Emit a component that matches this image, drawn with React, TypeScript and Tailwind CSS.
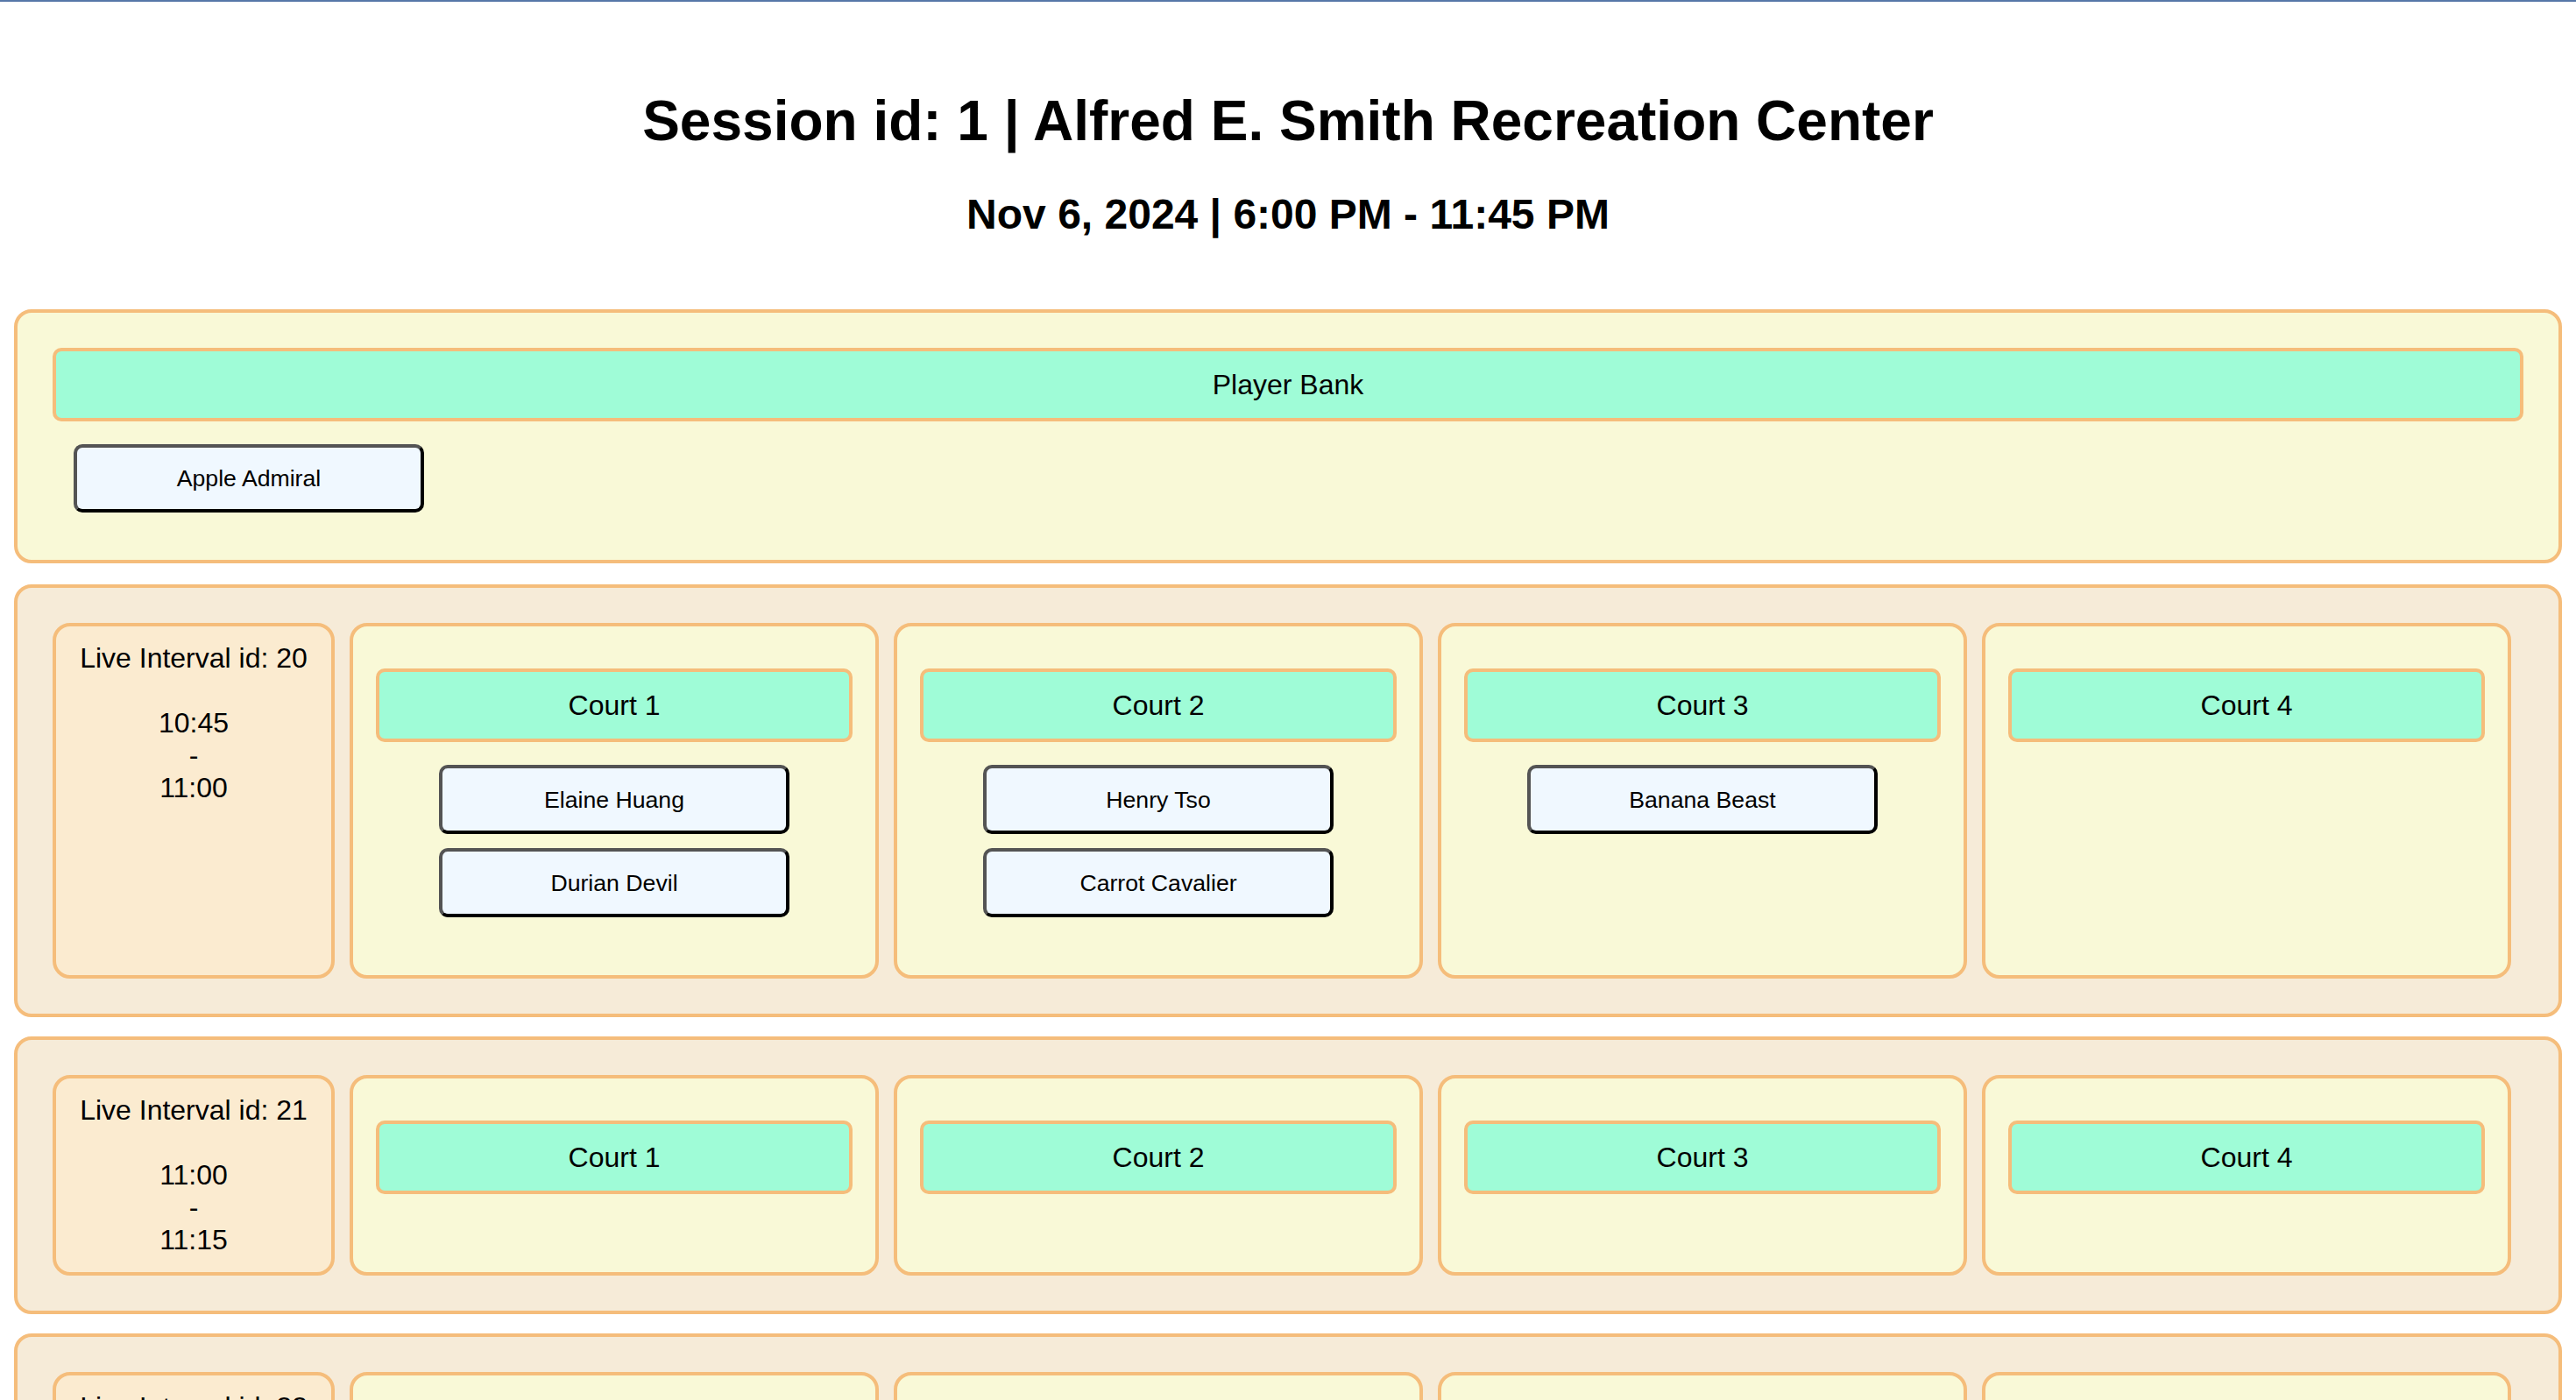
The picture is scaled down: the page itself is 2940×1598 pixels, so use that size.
import React from "react";

type Court = { name: string; players: string[] };
type Interval = { id: number; start: string; end: string; courts: Court[] };

const emptyCourts = (): Court[] => [
  { name: "Court 1", players: [] },
  { name: "Court 2", players: [] },
  { name: "Court 3", players: [] },
  { name: "Court 4", players: [] },
];

const intervals: Interval[] = [
  {
    id: 20,
    start: "10:45",
    end: "11:00",
    courts: [
      { name: "Court 1", players: ["Elaine Huang", "Durian Devil"] },
      { name: "Court 2", players: ["Henry Tso", "Carrot Cavalier"] },
      { name: "Court 3", players: ["Banana Beast"] },
      { name: "Court 4", players: [] },
    ],
  },
  { id: 21, start: "11:00", end: "11:15", courts: emptyCourts() },
  { id: 22, start: "11:15", end: "11:30", courts: emptyCourts() },
  { id: 23, start: "11:30", end: "11:45", courts: emptyCourts() },
];

function PlayerChip({ name, bank }: { name: string; bank?: boolean }) {
  return (
    <button
      className={
        (bank ? "h-[78px] " : "h-[79px] ") +
        "w-[400px] shrink-0 rounded-[10px] border-[4px] border-solid border-t-[#545454] border-l-[#545454] border-r-black border-b-black bg-[#f0f8ff] text-[26.67px] text-black"
      }
    >
      {name}
    </button>
  );
}

function Header({ label }: { label: string }) {
  return (
    <div className="h-[84px] flex items-center justify-center rounded-[10px] border-[4px] border-[#f5bd7b] bg-[#9ffcd7] text-[32px] leading-[37px]">
      {label}
    </div>
  );
}

function CourtCard({ court }: { court: Court }) {
  return (
    <div className="w-[604px] shrink-0 rounded-[20px] border-[4px] border-[#f5bd7b] bg-[#f9f9d7] px-[26px] pt-[48px] pb-[63px]">
      <Header label={court.name} />
      <div
        className={
          court.players.length > 0
            ? "mt-[26px] pb-[3px] flex flex-col items-center gap-[16px]"
            : "mt-[26px] flex flex-col items-center gap-[16px]"
        }
      >
        {court.players.map((p) => (
          <PlayerChip key={p} name={p} />
        ))}
      </div>
    </div>
  );
}

function IntervalRow({ interval }: { interval: Interval }) {
  return (
    <div className="mx-[16px] mt-[22px] flex gap-[17px] rounded-[20px] border-[4px] border-[#f5bd7b] bg-[#f6ebd8] p-[40px]">
      <div className="w-[322px] shrink-0 rounded-[20px] border-[4px] border-[#f5bd7b] bg-[#fbebd0] py-[18px] text-center text-[32px] leading-[37px]">
        <div>Live Interval id: {interval.id}</div>
        <div className="h-[37px]" />
        <div>{interval.start}</div>
        <div>-</div>
        <div>{interval.end}</div>
      </div>
      {interval.courts.map((c) => (
        <CourtCard key={c.name} court={c} />
      ))}
    </div>
  );
}

export default function App() {
  return (
    <div className="min-h-screen bg-white text-black font-['Liberation_Sans',Arial,sans-serif]">
      <div className="h-[2px] bg-[#5677a8]" />
      <h1 className="mt-[99px] text-center text-[64px] leading-[74px] font-bold">
        Session id: 1 | Alfred E. Smith Recreation Center
      </h1>
      <h2 className="mt-[42px] text-center text-[48px] leading-[55px] font-bold">
        Nov 6, 2024 | 6:00 PM - 11:45 PM
      </h2>

      <div className="mx-[16px] mt-[81px] rounded-[20px] border-[4px] border-[#f5bd7b] bg-[#f9f9d7] px-[40px] pt-[40px] pb-[54px]">
        <Header label="Player Bank" />
        <div className="mt-[26px] px-[24px] flex flex-wrap gap-[16px]">
          <PlayerChip name="Apple Admiral" bank />
        </div>
      </div>

      <div className="pt-[2px] pb-[40px]">
        {intervals.map((iv) => (
          <IntervalRow key={iv.id} interval={iv} />
        ))}
      </div>
    </div>
  );
}
